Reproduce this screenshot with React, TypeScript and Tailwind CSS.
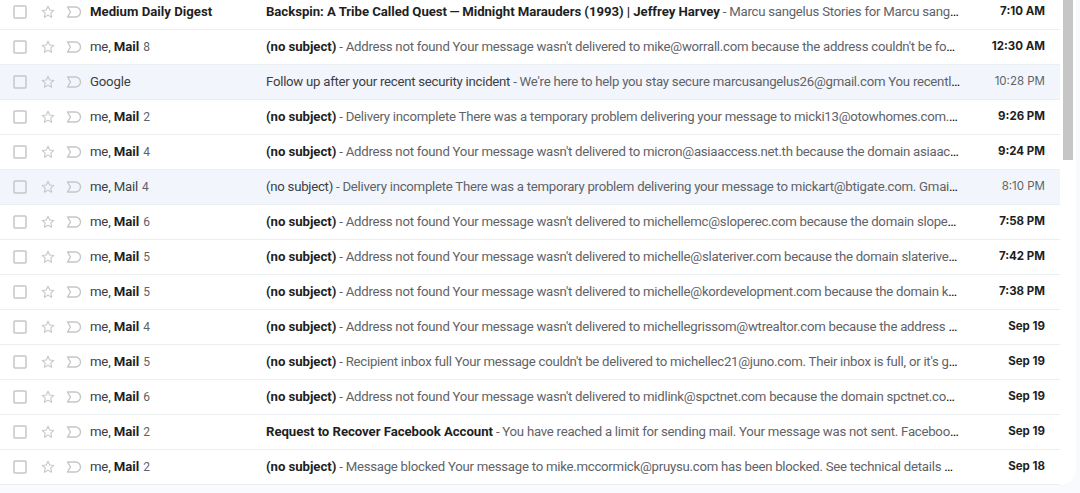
import React from "react";

type Mail = {
  from: React.ReactNode;
  count?: number;
  subject: string;
  snippet: string;
  time: string;
  read?: boolean;
};

const me = (read?: boolean) => (
  <>
    me, <span className={read ? "" : "font-bold text-[#1f1f1f] tracking-normal"}>Mail</span>
  </>
);

const mails: Mail[] = [
  {
    from: <span className="font-bold text-[#1f1f1f] tracking-normal">Medium Daily Digest</span>,
    subject: "Backspin: A Tribe Called Quest\u2009\u2014\u2009Midnight Marauders (1993) | Jeffrey Harvey",
    snippet: "Marcu sangelus Stories for Marcu sangelus Today's highlights",
    time: "7:10 AM",
  },
  {
    from: me(),
    count: 8,
    subject: "(no subject)",
    snippet: "Address not found Your message wasn't delivered to mike@worrall.com because the address couldn't be found",
    time: "12:30 AM",
  },
  {
    from: "Google",
    subject: "Follow up after your recent security incident",
    snippet: "We're here to help you stay secure marcusangelus26@gmail.com You recently reported",
    time: "10:28 PM",
    read: true,
  },
  {
    from: me(),
    count: 2,
    subject: "(no subject)",
    snippet: "Delivery incomplete There was a temporary problem delivering your message to micki13@otowhomes.com. Gmail will retry",
    time: "9:26 PM",
  },
  {
    from: me(),
    count: 4,
    subject: "(no subject)",
    snippet: "Address not found Your message wasn't delivered to micron@asiaaccess.net.th because the domain asiaaccess.net.th",
    time: "9:24 PM",
  },
  {
    from: me(true),
    count: 4,
    subject: "(no subject)",
    snippet: "Delivery incomplete There was a temporary problem delivering your message to mickart@btigate.com. Gmail will retry",
    time: "8:10 PM",
    read: true,
  },
  {
    from: me(),
    count: 6,
    subject: "(no subject)",
    snippet: "Address not found Your message wasn't delivered to michellemc@sloperec.com because the domain sloperec.com couldn't",
    time: "7:58 PM",
  },
  {
    from: me(),
    count: 5,
    subject: "(no subject)",
    snippet: "Address not found Your message wasn't delivered to michelle@slateriver.com because the domain slateriver.com couldn't",
    time: "7:42 PM",
  },
  {
    from: me(),
    count: 5,
    subject: "(no subject)",
    snippet: "Address not found Your message wasn't delivered to michelle@kordevelopment.com because the domain kordevelopment.com",
    time: "7:38 PM",
  },
  {
    from: me(),
    count: 4,
    subject: "(no subject)",
    snippet: "Address not found Your message wasn't delivered to michellegrissom@wtrealtor.com because the address couldn't be found",
    time: "Sep 19",
  },
  {
    from: me(),
    count: 5,
    subject: "(no subject)",
    snippet: "Recipient inbox full Your message couldn't be delivered to michellec21@juno.com. Their inbox is full, or it's getting too much mail",
    time: "Sep 19",
  },
  {
    from: me(),
    count: 6,
    subject: "(no subject)",
    snippet: "Address not found Your message wasn't delivered to midlink@spctnet.com because the domain spctnet.com couldn't be found",
    time: "Sep 19",
  },
  {
    from: me(),
    count: 2,
    subject: "Request to Recover Facebook Account",
    snippet: "You have reached a limit for sending mail. Your message was not sent. Facebook account recovery",
    time: "Sep 19",
  },
  {
    from: me(),
    count: 2,
    subject: "(no subject)",
    snippet: "Message blocked Your message to mike.mccormick@pruysu.com has been blocked. See technical details below",
    time: "Sep 18",
  },
];

const Checkbox = () => (
  <svg width="14" height="14" viewBox="0 0 14 14" className="shrink-0">
    <rect x="1" y="1" width="12" height="12" rx="1" fill="none" stroke="#c4c7c5" strokeWidth="1.5" />
  </svg>
);

const Star = () => (
  <svg width="16" height="16" viewBox="0 0 24 24" className="shrink-0">
    <path
      d="M12 3.5l2.6 5.6 6.1.6-4.6 4.1 1.3 6-5.4-3.1-5.4 3.1 1.3-6-4.6-4.1 6.1-.6z"
      fill="none"
      stroke="#c4c7c5"
      strokeWidth="1.6"
      strokeLinejoin="round"
    />
  </svg>
);

const Important = () => (
  <svg width="18" height="16" viewBox="0 0 18 16" className="shrink-0">
    <path
      d="M2.5 3h8a5 5 0 0 1 0 10h-8l3-5z"
      fill="none"
      stroke="#c4c7c5"
      strokeWidth="1.4"
      strokeLinejoin="round"
    />
  </svg>
);

const Row = ({ m }: { m: Mail }) => (
  <div
    className={`h-[35px] flex items-center border-b border-[#eceff1] text-[13.2px] ${
      m.read ? "bg-[#f2f6fc]" : "bg-white"
    }`}
  >
    <div className="w-[90px] shrink-0 flex items-center pl-[13px]">
      <Checkbox />
      <span className="ml-[13px]">
        <Star />
      </span>
      <span className="ml-[9px]">
        <Important />
      </span>
    </div>
    <div className="w-[176px] shrink-0 truncate text-[#3c4043] tracking-[-0.2px]">
      {m.from}
      {m.count ? <span className="ml-[4px] text-[12px] text-[#5f6368]">{m.count}</span> : null}
    </div>
    <div className="flex-1 min-w-0 truncate pr-[20px]">
      <span
        className={
          m.read ? "text-[#3c4043] tracking-[-0.25px]" : "font-bold text-[#1f1f1f] tracking-[-0.05px]"
        }
      >
        {m.subject}
      </span>
      <span className="text-[#5f6368] tracking-[-0.25px]"> - {m.snippet}</span>
    </div>
    <div
      className={`w-[80px] shrink-0 text-right pr-[15px] text-[11.5px] font-['Inter',sans-serif] ${
        m.read ? "text-[#5f6368]" : "font-bold text-[#1f1f1f]"
      }`}
    >
      {m.time}
    </div>
  </div>
);

export default function App() {
  return (
    <div className="h-[493px] w-[1080px] overflow-hidden bg-[#f8fafd] font-['Roboto',sans-serif]">
      <div className="flex -mt-[5px] bg-white rounded-b-2xl w-[1076px]">
        <div className="w-[1060px]">
          {mails.map((m, i) => (
            <Row key={i} m={m} />
          ))}
        </div>
        <div className="flex-1 pl-[3px] pt-[5px]">
          <div className="w-[10px] h-[160px] bg-[#c6c6c6]" />
        </div>
      </div>
    </div>
  );
}
